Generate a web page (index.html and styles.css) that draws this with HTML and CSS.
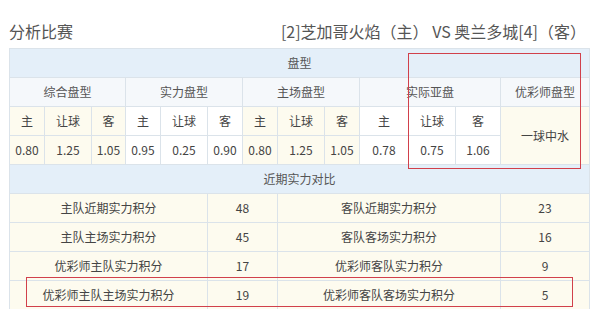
FILE: index.html
```html
<!DOCTYPE html>
<html lang="zh">
<head>
<meta charset="utf-8">
<link rel="stylesheet" href="styles.css">
</head>
<body>
<div class="page">
  <div class="title-bar">
    <span class="title-left">分析比赛</span>
    <span class="title-right">[2]芝加哥火焰（主） VS 奥兰多城[4]（客）</span>
  </div>
  <table class="grid">
    <colgroup>
      <col style="width:35px"><col style="width:47px"><col style="width:34px">
      <col style="width:35px"><col style="width:47px"><col style="width:35px">
      <col style="width:35px"><col style="width:47px"><col style="width:35px">
      <col style="width:49px"><col style="width:47px"><col style="width:45px">
      <col style="width:89px">
    </colgroup>
    <tr class="head"><td colspan="13">盘型</td></tr>
    <tr class="group">
      <td colspan="3">综合盘型</td>
      <td colspan="3">实力盘型</td>
      <td colspan="3">主场盘型</td>
      <td colspan="3">实际亚盘</td>
      <td>优彩师盘型</td>
    </tr>
    <tr>
      <td class="c">主</td><td class="c">让球</td><td class="c">客</td>
      <td>主</td><td>让球</td><td>客</td>
      <td class="c">主</td><td class="c">让球</td><td class="c">客</td>
      <td>主</td><td>让球</td><td>客</td>
      <td class="c" rowspan="2">一球中水</td>
    </tr>
    <tr>
      <td class="c">0.80</td><td class="c">1.25</td><td class="c">1.05</td>
      <td>0.95</td><td>0.25</td><td>0.90</td>
      <td class="c">0.80</td><td class="c">1.25</td><td class="c">1.05</td>
      <td>0.78</td><td>0.75</td><td>1.06</td>
    </tr>
    <tr class="head"><td colspan="13">近期实力对比</td></tr>
    <tr class="c">
      <td colspan="5">主队近期实力积分</td><td colspan="2">48</td>
      <td colspan="5">客队近期实力积分</td><td>23</td>
    </tr>
    <tr class="c">
      <td colspan="5">主队主场实力积分</td><td colspan="2">45</td>
      <td colspan="5">客队客场实力积分</td><td>16</td>
    </tr>
    <tr class="c">
      <td colspan="5">优彩师主队实力积分</td><td colspan="2">17</td>
      <td colspan="5">优彩师客队实力积分</td><td>9</td>
    </tr>
    <tr class="c">
      <td colspan="5">优彩师主队主场实力积分</td><td colspan="2">19</td>
      <td colspan="5">优彩师客队客场实力积分</td><td>5</td>
    </tr>
  </table>
  <div class="mark mark-a"></div>
  <div class="mark mark-b"></div>
</div>
</body>
</html>
```
FILE: styles.css
```css
html, body {
  margin: 0;
  padding: 0;
  background: #fff;
}
body {
  font-family: "Noto Sans CJK SC", "Microsoft YaHei", sans-serif;
  color: #333;
}
.page {
  position: relative;
  width: 598px;
  height: 309px;
  overflow: hidden;
  padding-left: 9px;
  box-sizing: border-box;
}
.title-bar {
  display: flex;
  justify-content: space-between;
  align-items: flex-end;
  height: 48px;
  width: 577px;
  box-sizing: border-box;
  padding-bottom: 6px;
  font-size: 16px;
  line-height: 22px;
  color: #555;
}
.grid {
  border-collapse: collapse;
  table-layout: fixed;
  width: 581px;
  font-size: 12px;
}
.grid td {
  border: 1px solid #dbe3ea;
  height: 28px;
  padding: 0;
  text-align: center;
  line-height: 16px;
  background: #fff;
  color: #444;
  white-space: nowrap;
}
.grid tr.head td {
  background: #e4eff9;
  color: #555;
}
.grid tr.group td {
  background: #f5f8fb;
  color: #555;
}
.grid td.c,
.grid tr.c td {
  background: #fdfbef;
}
.mark {
  position: absolute;
  border: 1.5px solid #d1404b;
  box-sizing: border-box;
}
.mark-a {
  left: 408px;
  top: 53px;
  width: 173px;
  height: 116px;
}
.mark-b {
  left: 26px;
  top: 277px;
  width: 547px;
  height: 30px;
}
```
